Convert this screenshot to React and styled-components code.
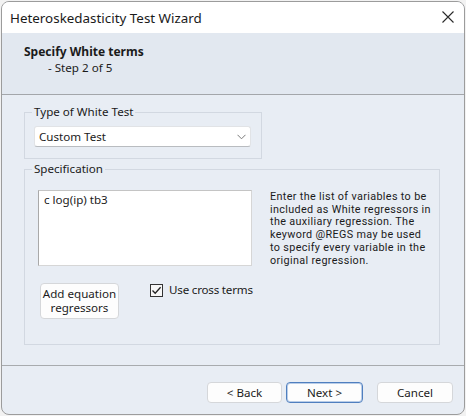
import React from 'react';
import styled, { createGlobalStyle } from 'styled-components';

const Global = createGlobalStyle`
  html, body { margin: 0; padding: 0; background: #f2f2f2; }
  body {
    width: 466px; height: 416px; overflow: hidden;
    font-family: "Noto Sans", "DejaVu Sans", sans-serif;
    color: #1b1b1b;
  }
  * { box-sizing: border-box; }
`;

const Window = styled.div`
  margin: 1px;
  width: 464px;
  height: 414px;
  border: 1px solid #9c9c9c;
  border-radius: 8px;
  overflow: hidden;
  background: #e8edf4;
  display: flex;
  flex-direction: column;
`;

const TitleBar = styled.div`
  height: 31px;
  flex: none;
  background: #ffffff;
  display: flex;
  align-items: center;
  justify-content: space-between;
  padding: 0 10px 0 8px;
`;

const TitleText = styled.div`
  font-size: 13.4px;
  color: #1a1a1a;
`;

const CloseBtn = styled.svg`
  display: block;
  margin-top: -1px;
`;

const Header = styled.div`
  height: 62px;
  flex: none;
  background: #e2e8f0;
  border-bottom: 1px solid #a3a6aa;
  padding: 11px 0 0 22px;
`;

const HeaderTitle = styled.div`
  font-size: 12px;
  font-weight: 700;
  line-height: 15px;
`;

const HeaderSub = styled.div`
  font-size: 11.6px;
  line-height: 15px;
  padding-left: 24px;
  margin-top: 1px;
`;

const Content = styled.div`
  flex: 1;
  display: flex;
  flex-direction: column;
  align-items: flex-start;
  padding: 10px 0 0 22px;
`;

const Group = styled.fieldset`
  margin: ${p => p.$mt || 0}px 0 0 0;
  width: ${p => p.$w}px;
  border: 1px solid #d2d8e1;
  padding: 0;
  min-width: 0;
`;

const Legend = styled.legend`
  font-size: 11.6px;
  line-height: 14px;
  padding: 0 2px;
  margin-left: 7px;
`;

const GroupBody = styled.div`
  padding: ${p => p.$pad};
`;

const Combo = styled.div`
  height: 21px;
  width: 217px;
  background: #ffffff;
  border: 1px solid #e1e3e6;
  border-bottom-color: #b9bcc0;
  border-radius: 3px;
  display: flex;
  align-items: center;
  justify-content: space-between;
  padding: 0 4px 0 4px;
  font-size: 11.6px;
`;

const SpecTop = styled.div`
  display: flex;
  align-items: flex-start;
  gap: 18px;
`;

const TextArea = styled.div`
  flex: none;
  width: 214px;
  height: 76px;
  background: #ffffff;
  border: 1px solid #d6d6d6;
  border-left-color: #a9a9a9;
  border-top-color: #c4c4c4;
  padding: 2px 5px;
  font-size: 11.6px;
  line-height: 14px;
`;

const Description = styled.div`
  flex: none;
  font-family: Roboto, "Noto Sans", sans-serif;
  font-size: 10.8px;
  line-height: 12.7px;
  letter-spacing: 0.35px;
  padding-top: 1px;
`;

const DescLine = styled.div`
  white-space: nowrap;
`;

const SpecBottom = styled.div`
  display: flex;
  align-items: flex-start;
  margin-top: 16px;
  padding-left: 2px;
`;

const Button = styled.button`
  flex: none;
  font-family: inherit;
  font-size: 11.6px;
  color: #1b1b1b;
  background: #fdfdfd;
  border: 1px solid ${p => (p.$default ? '#4f7fbf' : '#d5d7da')};
  box-shadow: ${p => (p.$default ? 'inset 0 0 0 1px #b9cde8' : 'none')};
  border-radius: 4px;
  width: ${p => p.$w || 76}px;
  height: ${p => p.$h || 21}px;
  margin-left: ${p => p.$ml || 0}px;
  padding: 0;
  line-height: 14px;
  cursor: default;
`;

const CheckRow = styled.label`
  display: flex;
  align-items: center;
  gap: 6px;
  margin-left: 31px;
  font-size: 11.6px;
  line-height: 14px;
  letter-spacing: -0.2px;
`;

const CheckBox = styled.span`
  width: 13px;
  height: 13px;
  border: 1px solid #333333;
  background: #f7f7f7;
  display: flex;
  align-items: center;
  justify-content: center;
`;

const Footer = styled.div`
  flex: none;
  height: 49px;
  border-top: 1px solid #a8abae;
  display: flex;
  justify-content: flex-end;
  align-items: flex-start;
  padding: 16px 11px 0 0;
`;

const descLines = [
  'Enter the list of variables to be',
  'included as White regressors in',
  'the auxiliary regression. The',
  'keyword @REGS may be used',
  'to specify every variable in the',
  'original regression.',
];

export default function App() {
  return (
    <>
      <Global />
      <Window>
        <TitleBar>
          <TitleText>Heteroskedasticity Test Wizard</TitleText>
          <CloseBtn width="12" height="12" viewBox="0 0 12 12">
            <path d="M0.5 0.5 L11.5 11.5 M11.5 0.5 L0.5 11.5" stroke="#2b2b2b" strokeWidth="1.1" fill="none" />
          </CloseBtn>
        </TitleBar>
        <Header>
          <HeaderTitle>Specify White terms</HeaderTitle>
          <HeaderSub>- Step 2 of 5</HeaderSub>
        </Header>
        <Content>
          <Group $w={238}>
            <Legend>Type of White Test</Legend>
            <GroupBody $pad="7px 10px 11px 9px">
              <Combo>
                <span>Custom Test</span>
                <svg width="9" height="6" viewBox="0 0 9 6">
                  <path d="M0.5 0.8 L4.5 4.8 L8.5 0.8" stroke="#7a7a7a" strokeWidth="1" fill="none" />
                </svg>
              </Combo>
            </GroupBody>
          </Group>
          <Group $w={416} $mt={3}>
            <Legend>Specification</Legend>
            <GroupBody $pad="14px 10px 25px 13px">
              <SpecTop>
                <TextArea>c log(ip) tb3</TextArea>
                <Description>
                  {descLines.map(l => (
                    <DescLine key={l}>{l}</DescLine>
                  ))}
                </Description>
              </SpecTop>
              <SpecBottom>
                <Button $w={79} $h={36}>Add equation<br />regressors</Button>
                <CheckRow>
                  <CheckBox>
                    <svg width="11" height="11" viewBox="0 0 11 11">
                      <path d="M1.5 5.5 L4.2 8.3 L9.6 2.2" stroke="#222" strokeWidth="1.3" fill="none" />
                    </svg>
                  </CheckBox>
                  Use cross terms
                </CheckRow>
              </SpecBottom>
            </GroupBody>
          </Group>
        </Content>
        <Footer>
          <Button $w={75}>&lt; Back</Button>
          <Button $w={77} $ml={4} $default>Next &gt;</Button>
          <Button $w={76} $ml={14}>Cancel</Button>
        </Footer>
      </Window>
    </>
  );
}
